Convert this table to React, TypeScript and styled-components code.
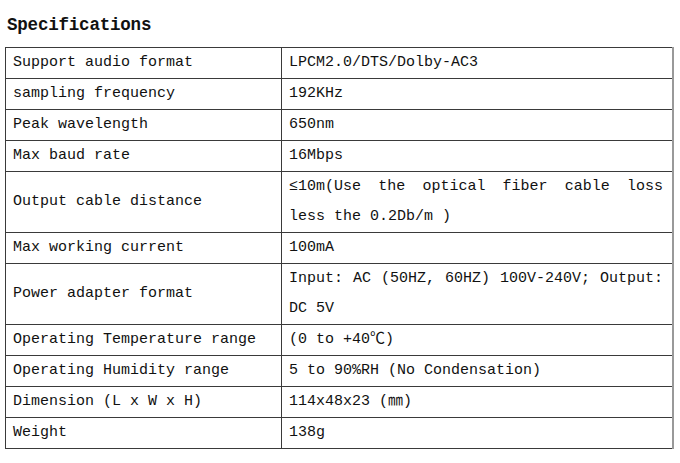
import React from "react";
import styled, { createGlobalStyle } from "styled-components";

const Global = createGlobalStyle`
  html, body { margin: 0; padding: 0; background: #ffffff; }
  body { width: 680px; height: 463px; overflow: hidden; }
`;

const mono = `"Liberation Mono", "Noto Sans CJK SC", monospace`;

const Page = styled.div`
  padding: 0 6px 0 5px;
  font-family: ${mono};
  color: #111;
`;

const Title = styled.h2`
  margin: 0 0 12px 2px;
  padding-top: 15px;
  font-size: 17.5px;
  line-height: 20px;
  font-weight: bold;
  color: #111;
  letter-spacing: -0.2px;
`;

const Table = styled.table`
  width: 669px;
  border-collapse: collapse;
  table-layout: fixed;
  border-top: 1px solid #9a9a9a;
  border-left: 1px solid #888;
  border-right: 2px solid #999;
  border-bottom: 1px solid #444;
`;

const Cell = styled.td<{ $w?: number }>`
  width: ${(p) => (p.$w ? `${p.$w}px` : "auto")};
  border: 1px solid #3a3a3a;
  padding: 0 9px 0 7px;
  font-size: 15px;
  line-height: 30px;
  vertical-align: middle;
  color: #111;
  white-space: nowrap;
`;

const Line = styled.div<{ $justify?: boolean }>`
  text-align: ${(p) => (p.$justify ? "justify" : "left")};
  text-align-last: ${(p) => (p.$justify ? "justify" : "left")};
  white-space: nowrap;
`;

type Spec = { label: string; value: string[] };

const specs: Spec[] = [
  { label: "Support audio format", value: ["LPCM2.0/DTS/Dolby-AC3"] },
  { label: "sampling frequency", value: ["192KHz"] },
  { label: "Peak wavelength", value: ["650nm"] },
  { label: "Max baud rate", value: ["16Mbps"] },
  {
    label: "Output cable distance",
    value: ["≤10m(Use the optical fiber cable loss", "less the 0.2Db/m )"],
  },
  { label: "Max working current", value: ["100mA"] },
  {
    label: "Power adapter format",
    value: ["Input: AC (50HZ, 60HZ) 100V-240V; Output:", "DC 5V"],
  },
  { label: "Operating Temperature range", value: ["(0 to +40℃)"] },
  { label: "Operating Humidity range", value: ["5 to 90%RH (No Condensation)"] },
  { label: "Dimension (L x W x H)", value: ["114x48x23 (㎜)"] },
  { label: "Weight", value: ["138g"] },
];

export default function App() {
  return (
    <Page>
      <Global />
      <Title>Specifications</Title>
      <Table>
        <tbody>
          {specs.map((s) => (
            <tr key={s.label}>
              <Cell $w={259}>{s.label}</Cell>
              <Cell>
                {s.value.map((v, i) => (
                  <Line key={i} $justify={s.value.length > 1 && i === 0}>
                    {v}
                  </Line>
                ))}
              </Cell>
            </tr>
          ))}
        </tbody>
      </Table>
    </Page>
  );
}
